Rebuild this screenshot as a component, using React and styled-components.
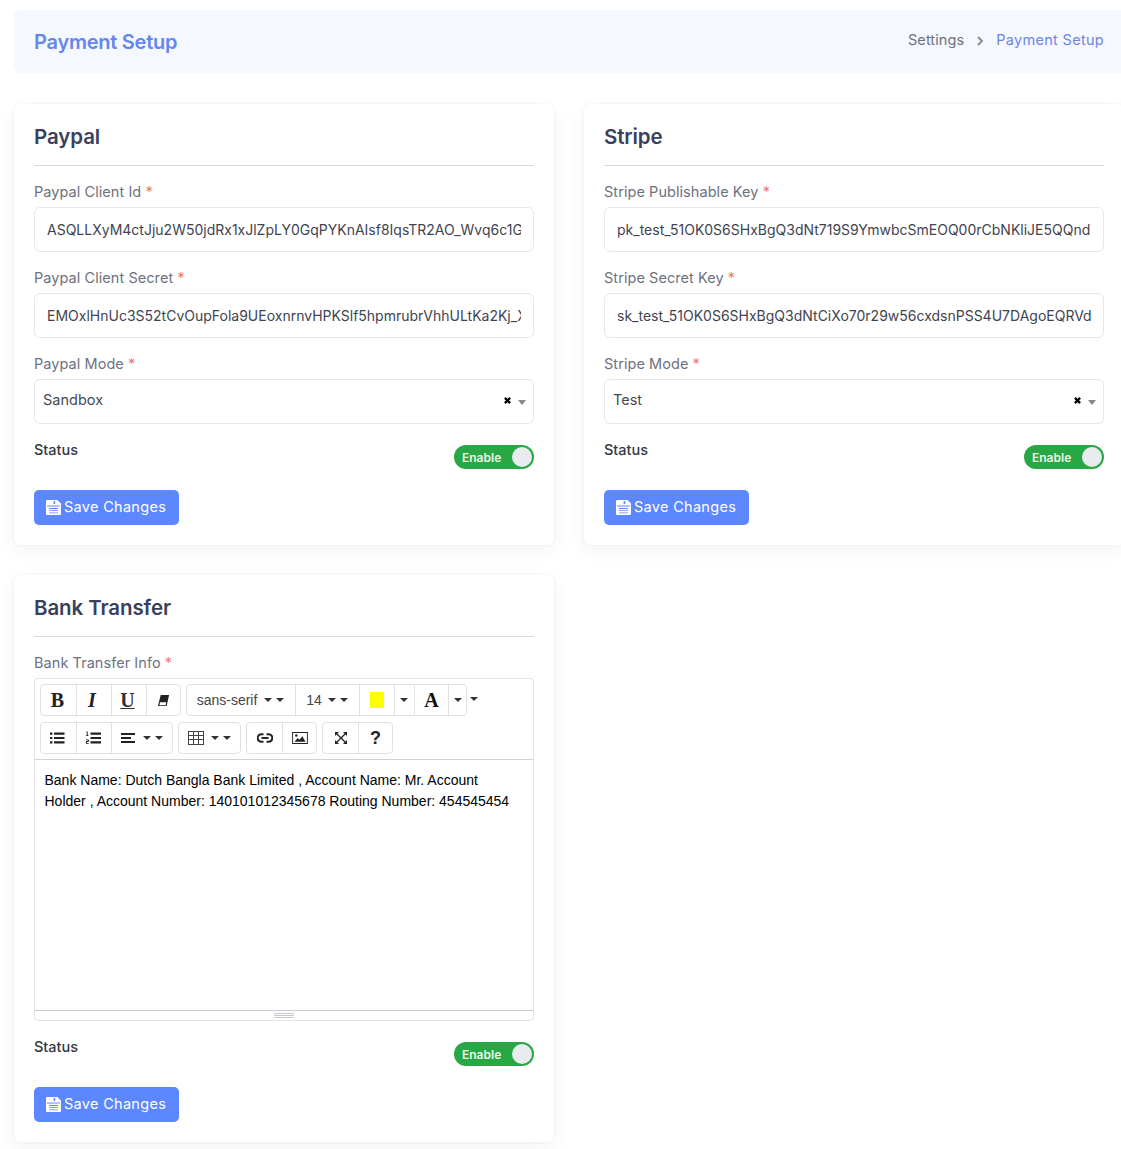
import React from "react";
import styled, { createGlobalStyle } from "styled-components";

const Global = createGlobalStyle`
  html, body { margin: 0; padding: 0; background: #fff; overflow-x: hidden; }
  * { box-sizing: border-box; }
  body { font-family: "Inter", "Liberation Sans", sans-serif; }
`;
const Page = styled.div`
  width: 1110px; margin-left: 14px; padding: 10px 0 7px;
`;
const Header = styled.header`
  height: 63px; background: #f5f8ff; border-radius: 6px 0 0 6px;
  display: flex; align-items: center; justify-content: space-between;
  padding: 0 20px;
`;
const PageTitle = styled.h1`
  margin: 0; font-size: 20px; font-weight: 600; color: #6586ee; letter-spacing: -0.25px;
`;
const Crumbs = styled.nav`
  display: flex; align-items: center; font-size: 14.5px; margin-top: -4px;
`;
const Crumb = styled.span`
  color: ${(p) => (p.$active ? "#6d85e8" : "#6c7280")};
  letter-spacing: ${(p) => (p.$active ? "0.3px" : "0.1px")};
`;
const CrumbSep = styled.svg`
  width: 8px; height: 10px; margin: 2px 12px 0 12px; fill: none; stroke: #8b8f9a; stroke-width: 2;
`;
const Grid = styled.div`
  display: grid; grid-template-columns: 540px 540px; column-gap: 30px; row-gap: 30px;
  margin-top: 31px; align-items: start;
`;
const Card = styled.section`
  background: #fff; border-radius: 6px; padding: 20px 20px 20px;
  box-shadow: 0 0 3px rgba(30, 40, 70, 0.06), 0 6px 18px rgba(30, 40, 70, 0.05);
`;
const CardTitle = styled.h2`
  margin: 0; height: 42px; line-height: 26px; padding-bottom: 15px;
  border-bottom: 1px solid #d8d9dd; font-size: 20.5px; font-weight: 600; color: #3b3f5c;
  letter-spacing: -0.1px;
`;
const Field = styled.div`
  margin-top: 16px;
`;
const Label = styled.label`
  display: block; height: 20px; line-height: 20px; margin-bottom: 5px;
  font-size: 14.5px; color: #6e7280; letter-spacing: 0.06px;
`;
const Req = styled.span`
  color: #ef7a72;
`;
const Input = styled.input`
  display: block; width: 100%; height: 45px; padding: 0 12px;
  border: 1px solid #e5e7eb; border-radius: 6px; background: #fff;
  font: 14px "Inter", sans-serif; color: #3f4450; outline: none;
`;
const SelectBox = styled.div`
  height: 45px; padding: 0 8px; border: 1px solid #e5e7eb; border-radius: 6px;
  display: flex; align-items: center; font-size: 14.5px; color: #444a55;
`;
const SelectValue = styled.span`
  flex: 1; margin-top: -4px;
`;
const ClearIcon = styled.svg`
  width: 7px; height: 7px; margin: -2px 7px 0 0; stroke: #000; stroke-width: 2.6; fill: none;
`;
const SelectCaret = styled.span`
  width: 0; height: 0; margin-right: -1px; margin-top: 1px;
  border-left: 4px solid transparent; border-right: 4px solid transparent;
  border-top: 5px solid #888;
`;
const StatusRow = styled.div`
  display: flex; justify-content: space-between; align-items: flex-start;
  margin-top: 21px;
`;
const StatusLabel = styled.span`
  font-size: 14.5px; font-weight: 500; color: #343a46; line-height: 20px; margin-top: -5px;
`;
const Toggle = styled.div`
  width: 80px; height: 24px; border-radius: 12px; background: #28a745;
  display: flex; align-items: center; justify-content: space-between;
  padding: 0 2px 0 8px;
`;
const ToggleText = styled.span`
  color: #e9f7ec; font-size: 12px; font-weight: 600;
`;
const Knob = styled.span`
  width: 20px; height: 20px; border-radius: 50%; background: #e9ecef;
`;
const SaveButton = styled.button`
  display: flex; align-items: center; gap: 3px; margin-top: 21px;
  height: 35px; width: 145px; padding: 0 12px 2px; border: 0; border-radius: 5px;
  background: #5d87ff; color: #fff; font: 14.5px "Inter", sans-serif; letter-spacing: 0.3px; white-space: nowrap;
`;
const SaveIcon = styled.svg`
  width: 15px; height: 15px; fill: #fff; flex: none; margin-top: 1px;
`;
const Editor = styled.div`
  border: 1px solid #e2e4e8; border-radius: 4px; height: 343px;
  display: flex; flex-direction: column;
`;
const Toolbar = styled.div`
  height: 81px; padding: 5px 5px 0; border-bottom: 1px solid #cfd2d6;
  display: flex; flex-direction: column; gap: 6px;
`;
const ToolRow = styled.div`
  display: flex; gap: 5px; align-items: center; height: 32px;
`;
const ToolGroup = styled.div`
  display: flex; height: 32px; border: 1px solid #dee2e6; border-radius: 4px; background: #fff;
`;
const ToolBtn = styled.div`
  width: ${(p) => p.$w || 35}px; height: 100%;
  display: flex; align-items: center; justify-content: center; gap: ${(p) => p.$gap || 4}px;
  padding-right: ${(p) => p.$shift || 0}px;
  border-left: ${(p) => (p.$first ? "0" : "1px solid #dee2e6")};
  font: 14px "Liberation Sans", sans-serif; color: #444;
`;
const SerifGlyph = styled.span`
  font: ${(p) => (p.$italic ? "italic" : "normal")} bold 20px "Liberation Serif", serif;
  color: ${(p) => p.$color || "#222"};
  text-decoration: ${(p) => (p.$under ? "underline" : "none")};
  text-decoration-thickness: 1px; text-underline-offset: 1px;
`;
const HelpGlyph = styled.span`
  font: bold 18px "Liberation Sans", sans-serif; color: #222;
`;
const Caret = styled.span`
  width: 0; height: 0; flex: none;
  margin-left: ${(p) => p.$ml || 0}px;
  border-left: 4px solid transparent; border-right: 4px solid transparent;
  border-top: 4px solid #333;
`;
const OuterCaret = styled(Caret)`
  margin-left: -2px; position: relative; top: -1px;
`;
const Swatch = styled.span`
  width: 14px; height: 16px; background: #ff0;
`;
const ToolIcon = styled.svg`
  width: ${(p) => p.$w || 16}px; height: ${(p) => p.$h || 16}px; fill: #222; flex: none;
`;
const EditorBody = styled.div`
  flex: 1; padding: 10px 10px 10px 9.5px; font: 14px/21px "Liberation Sans", sans-serif; color: #000;
`;
const Resize = styled.div`
  height: 10px; border-top: 1px solid #c9ccd0; display: flex; flex-direction: column;
  align-items: center; justify-content: center; gap: 1px;
`;
const ResizeLine = styled.span`
  width: 20px; height: 1px; background: #c4c7cc;
`;

const Save = () => (
  <SaveButton>
    <SaveIcon viewBox="0 0 15 15">
      <path fillRule="evenodd" d="M1 0h10.4L15 3.6V14a1 1 0 0 1-1 1H1a1 1 0 0 1-1-1V1a1 1 0 0 1 1-1zM7.6 1v3h1.6V1zM1 5.6v.9h13v-.9zM3 8v.9h9V8zM3 10.2v.9h9v-.9zM3 12.4v.9h9v-.9z" />
    </SaveIcon>
    Save Changes
  </SaveButton>
);

const Status = () => (
  <StatusRow>
    <StatusLabel>Status</StatusLabel>
    <Toggle><ToggleText>Enable</ToggleText><Knob /></Toggle>
  </StatusRow>
);

const TextField = ({ label, value }) => (
  <Field>
    <Label>{label} <Req>*</Req></Label>
    <Input readOnly value={value} />
  </Field>
);

const SelectField = ({ label, value }) => (
  <Field>
    <Label>{label} <Req>*</Req></Label>
    <SelectBox>
      <SelectValue>{value}</SelectValue>
      <ClearIcon viewBox="0 0 8 8"><path d="M1 1l6 6M7 1L1 7" /></ClearIcon>
      <SelectCaret />
    </SelectBox>
  </Field>
);

const ListIcon = () => (
  <ToolIcon viewBox="0 0 16 16">
    <path d="M1 2.5h2.4v2.2H1zM5 2.5h10.5v2.2H5zM1 6.9h2.4v2.2H1zM5 6.9h10.5v2.2H5zM1 11.3h2.4v2.2H1zM5 11.3h10.5v2.2H5z" />
  </ToolIcon>
);
const OrderedIcon = () => (
  <ToolIcon viewBox="0 0 16 16">
    <path d="M5.5 2.5h10.5v2.2H5.5zM5.5 6.9h10.5v2.2H5.5zM5.5 11.3h10.5v2.2H5.5zM1.5 1.5h1.2v3.8H3.5v.8H1v-.8h.8V2.4h-.6zM1 9.5h2.8v2.4H2v1h1.8v.8H1v-2.6h1.8v-.8H1z" />
  </ToolIcon>
);
const AlignIcon = () => (
  <ToolIcon viewBox="0 0 15 16" $w={15}>
    <path d="M0 3h14v2H0zM0 7h10v2H0zM0 11h14v2H0z" />
  </ToolIcon>
);
const TableIcon = () => (
  <ToolIcon viewBox="0 0 16 14" $h={14}>
    <path fillRule="evenodd" fill="#444" d="M0 0h16v14H0zM1 1v3h4V1zM6 1v3h4V1zM11 1v3h4V1zM1 5v3h4V5zM6 5v3h4V5zM11 5v3h4V5zM1 9v4h4V9zM6 9v4h4V9zM11 9v4h4V9z" />
  </ToolIcon>
);
const LinkIcon = () => (
  <ToolIcon viewBox="0 0 16 10" $h={10} style={{ fill: "none", stroke: "#222", strokeWidth: 2 }}>
    <path d="M6.5 1.2H4.5a3.8 3.8 0 0 0 0 7.6h2M9.5 1.2h2a3.8 3.8 0 0 1 0 7.6h-2M4.5 5h7" />
  </ToolIcon>
);
const PictureIcon = () => (
  <ToolIcon viewBox="0 0 17 13" $w={16} $h={12}>
    <path fillRule="evenodd" d="M0 0h17v13H0zM1 1v11h15V1z" />
    <path d="M2.5 10.5l3.5-4 2 2 3-4 3.5 6z" />
    <circle cx="4.5" cy="3.8" r="1.3" />
  </ToolIcon>
);
const FullIcon = () => (
  <ToolIcon viewBox="0 0 14 14" $w={14} $h={14}>
    <path d="M1 1h4L1 5zM13 1v4L9 1zM13 13H9l4-4zM1 13V9l4 4z" />
    <path d="M2.5 2.5l9 9M11.5 2.5l-9 9" stroke="#222" strokeWidth="1.3" fill="none" />
  </ToolIcon>
);
const EraserIcon = () => (
  <ToolIcon viewBox="0 0 14 14" $w={13} $h={13}>
    <path fillRule="evenodd" d="M4 1h9l-2.6 12H1zM2.6 12h6.8l.6-3H3.2z" />
  </ToolIcon>
);

export default function App() {
  return (
    <Page>
      <Global />
      <Header>
        <PageTitle>Payment Setup</PageTitle>
        <Crumbs>
          <Crumb>Settings</Crumb>
          <CrumbSep viewBox="0 0 8 10"><path d="M2 1l4 4-4 4" /></CrumbSep>
          <Crumb $active>Payment Setup</Crumb>
        </Crumbs>
      </Header>
      <Grid>
        <Card>
          <CardTitle>Paypal</CardTitle>
          <TextField label="Paypal Client Id" value="ASQLLXyM4ctJju2W50jdRx1xJlZpLY0GqPYKnAIsf8IqsTR2AO_Wvq6c1G9Hk3mTz" />
          <TextField label="Paypal Client Secret" value="EMOxlHnUc3S52tCvOupFola9UEoxnrnvHPKSlf5hpmrubrVhhULtKa2Kj_Xe81PqLm" />
          <SelectField label="Paypal Mode" value="Sandbox" />
          <Status />
          <Save />
        </Card>
        <Card>
          <CardTitle>Stripe</CardTitle>
          <TextField label="Stripe Publishable Key" value="pk_test_51OK0S6SHxBgQ3dNt719S9YmwbcSmEOQ00rCbNKliJE5QQnd7Tz" />
          <TextField label="Stripe Secret Key" value="sk_test_51OK0S6SHxBgQ3dNtCiXo70r29w56cxdsnPSS4U7DAgoEQRVd6Hp" />
          <SelectField label="Stripe Mode" value="Test" />
          <Status />
          <Save />
        </Card>
        <Card>
          <CardTitle>Bank Transfer</CardTitle>
          <Field>
            <Label>Bank Transfer Info <Req>*</Req></Label>
            <Editor>
              <Toolbar>
                <ToolRow>
                  <ToolGroup>
                    <ToolBtn $first $shift={2}><SerifGlyph>B</SerifGlyph></ToolBtn>
                    <ToolBtn $shift={4}><SerifGlyph $italic>I</SerifGlyph></ToolBtn>
                    <ToolBtn $shift={3}><SerifGlyph $under $color="#333">U</SerifGlyph></ToolBtn>
                    <ToolBtn $w={34}><EraserIcon /></ToolBtn>
                  </ToolGroup>
                  <ToolGroup>
                    <ToolBtn $first $w={108} $shift={1}>sans-serif <Caret $ml={3} /><Caret /></ToolBtn>
                    <ToolBtn $w={64} $shift={1}>14 <Caret $ml={2} /><Caret /></ToolBtn>
                    <ToolBtn><Swatch /></ToolBtn>
                    <ToolBtn $w={20} $shift={2}><Caret /></ToolBtn>
                    <ToolBtn $w={34}><SerifGlyph $color="#111">A</SerifGlyph></ToolBtn>
                    <ToolBtn $w={18}><Caret /></ToolBtn>
                  </ToolGroup>
                  <OuterCaret />
                </ToolRow>
                <ToolRow>
                  <ToolGroup>
                    <ToolBtn $first $shift={3}><ListIcon /></ToolBtn>
                    <ToolBtn $shift={3}><OrderedIcon /></ToolBtn>
                    <ToolBtn $w={61}><AlignIcon /><Caret $ml={3} /><Caret /></ToolBtn>
                  </ToolGroup>
                  <ToolGroup>
                    <ToolBtn $first $w={61}><TableIcon /><Caret $ml={3} /><Caret /></ToolBtn>
                  </ToolGroup>
                  <ToolGroup>
                    <ToolBtn $first><LinkIcon /></ToolBtn>
                    <ToolBtn $w={34}><PictureIcon /></ToolBtn>
                  </ToolGroup>
                  <ToolGroup>
                    <ToolBtn $first><FullIcon /></ToolBtn>
                    <ToolBtn $w={34}><HelpGlyph>?</HelpGlyph></ToolBtn>
                  </ToolGroup>
                </ToolRow>
              </Toolbar>
              <EditorBody>
                Bank Name: Dutch Bangla Bank Limited , Account Name: Mr. Account Holder , Account Number: 140101012345678 Routing Number: 454545454
              </EditorBody>
              <Resize><ResizeLine /><ResizeLine /><ResizeLine /></Resize>
            </Editor>
          </Field>
          <Status />
          <Save />
        </Card>
      </Grid>
    </Page>
  );
}
